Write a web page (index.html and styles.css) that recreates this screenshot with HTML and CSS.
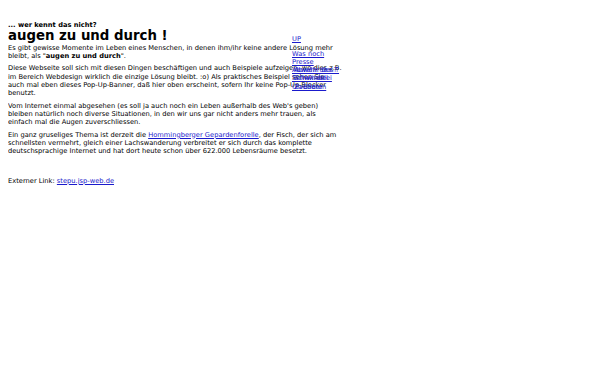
FILE: index.html
```html
<!DOCTYPE html>
<html>
<head>
    <title>augen zu und durch !</title>
    <meta charset="UTF-8">
    <link rel="stylesheet" href="styles.css">
</head>
<body>
    <div class="page">
        <div class="intro">... wer kennt das nicht?</div>
        <h1 class="title">augen zu und durch !</h1>
        <p>Es gibt gewisse Momente im Leben eines Menschen, in denen ihm/ihr keine andere Lösung mehr bleibt, als "<b>augen zu und durch</b>".</p>
        <p>Diese Webseite soll sich mit diesen Dingen beschäftigen und auch Beispiele aufzeigen, wo dies z.B. im Bereich Webdesign wirklich die einzige Lösung bleibt. :o) Als praktisches Beispiel sehen Sie<br>auch mal eben dieses Pop-Up-Banner, daß hier oben erscheint, sofern Ihr keine Pop-Up-Blocker benutzt.</p>
        <p>Vom Internet einmal abgesehen (es soll ja auch noch ein Leben außerhalb des Web's geben)<br>bleiben natürlich noch diverse Situationen, in den wir uns gar nicht anders mehr trauen, als<br>einfach mal die Augen zuverschliessen.</p>
        <p>Ein ganz gruseliges Thema ist derzeit die <a href="#">Hommingberger Gepardenforelle</a>, der Fisch, der sich am schnellsten vermehrt, gleich einer Lachswanderung verbreitet er sich durch das komplette deutschsprachige Internet und hat dort heute schon über 622.000 Lebensräume besetzt.</p>
        <p class="extern">Externer Link: <a href="#">stepu.jsp-web.de</a></p>

        <div class="menu">
            <a href="#" class="up">UP</a>
            <a href="#">Was noch</a>
            <a href="#">Presse</a>
            <a href="#">Abwehr des ?</a>
            <a href="#">Schwindelei</a>
            <a href="#">Un-Bilder</a>
            <a href="#" class="second">Abwehr des ?</a>
            <a href="#">Schwindel</a>
            <a href="#">Zauberen</a>
        </div>
    </div>
</body>
</html>
```

FILE: styles.css
```css
body {
    margin: 8px;
    background-color: #ffffff;
    color: #000000;
    font-family: "DejaVu Sans", Verdana, sans-serif;
    font-size: 6.7px;
    line-height: 8.2px;
}

.page {
    position: relative;
    width: 343px;
    padding-top: 13px;
}

.intro {
    font-weight: bold;
}

.title {
    font-size: 13.3px;
    font-weight: bold;
    margin: 0;
    line-height: 14.4px;
}

p {
    margin: 0 0 4.4px 0;
}

.extern {
    margin-top: 21.5px;
}

a {
    color: #1a1acc;
}

/* pop-up menu lying over the text */
.menu {
    position: absolute;
    left: 284px;
    top: 26.5px;
    display: flex;
    flex-direction: column;
    align-items: flex-start;
}

.menu .up {
    margin-bottom: 7px;
}

.menu .second {
    margin-top: -24.6px;
    margin-left: 2px;
}

.menu .second ~ a {
    margin-left: 2px;
}
```
